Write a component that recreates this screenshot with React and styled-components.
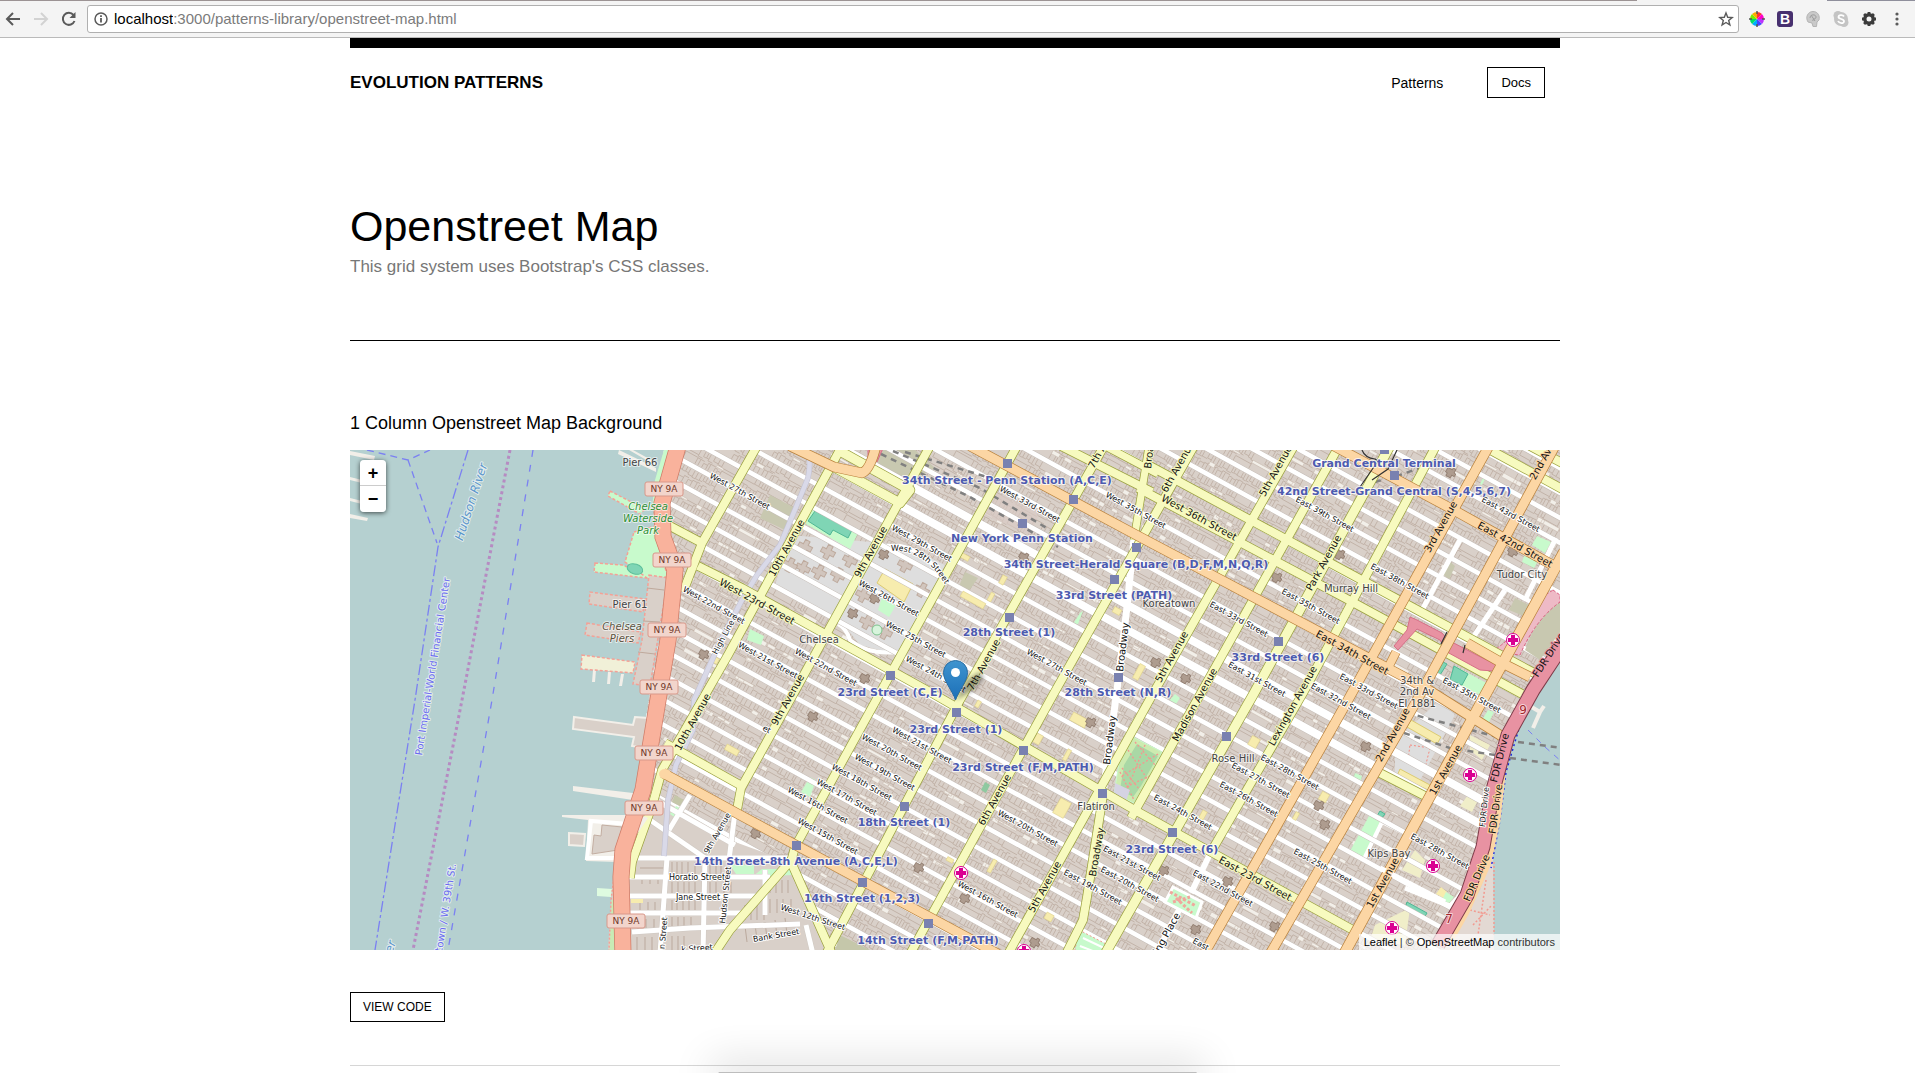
import React from "react";
import styled, { createGlobalStyle } from "styled-components";

const GlobalStyle = createGlobalStyle`
  *, *::before, *::after { box-sizing: border-box; }
  html, body { margin: 0; padding: 0; }
  body {
    background: #fff;
    color: #000;
    font-family: "Liberation Sans", Arial, sans-serif;
    overflow: hidden;
  }
`;

/* ---------- browser bar ---------- */

const BrowserBar = styled.header`
  display: flex;
  align-items: center;
  height: 38px;
  padding: 1px 8px 0 3px;
  background:
    linear-gradient(to right, #9c9394 0 85.5%, #f4f4f4 85.5% 95.4%, #8f8f9c 95.4%) top / 100% 1px no-repeat,
    #f4f4f4;
  border-bottom: 1px solid #bababa;
`;

const NavButtons = styled.nav`
  display: flex;
  gap: 8px;
  margin-right: 8px;
`;

const IconButton = styled.button`
  display: flex;
  align-items: center;
  justify-content: center;
  width: 20px;
  height: 24px;
  padding: 0;
  border: 0;
  background: none;
  color: ${(p) => p.$color || "#5a5a5a"};
`;

const AddressBar = styled.form`
  display: flex;
  flex: 1;
  align-items: center;
  height: 28px;
  padding: 0 2px 0 6px;
  background: #fff;
  border: 1px solid #b0b0b0;
  border-radius: 3px;
`;

const Host = styled.label`
  margin-left: 6px;
  font-size: 15px;
  line-height: 20px;
`;

const AddressInput = styled.input`
  flex: 1;
  min-width: 0;
  padding: 0;
  border: 0;
  outline: 0;
  color: #7b7b7b;
  font: 15px/20px "Liberation Sans", Arial, sans-serif;
`;

const Extensions = styled.div`
  display: flex;
  gap: 8px;
  margin-left: 8px;
`;

/* ---------- page ---------- */

const Viewport = styled.div`
  padding: 0 21px 0 16px;
`;

const Page = styled.div`
  max-width: 1210px;
  margin: 0 auto;
`;

const SiteHeader = styled.header`
  display: flex;
  align-items: center;
  justify-content: space-between;
  padding: 19px 15px 0 0;
  border-top: 10px solid #000;
`;

const Brand = styled.a`
  color: #000;
  font-size: 17px;
  font-weight: 700;
  text-decoration: none;
`;

const Menu = styled.nav`
  display: flex;
  align-items: center;
  gap: 44px;
`;

const MenuLink = styled.a`
  color: #000;
  font-size: 14px;
  line-height: 18px;
  text-decoration: none;
`;

const OutlineButton = styled.button`
  height: ${(p) => (p.$small ? 30 : 31)}px;
  padding: 0 ${(p) => (p.$small ? 12 : 13)}px;
  border: 1px solid #000;
  background: #fff;
  color: #000;
  font-family: inherit;
  font-size: ${(p) => (p.$small ? 12 : 13)}px;
`;

const Intro = styled.section`
  padding: 100px 0 61px;
  border-bottom: 1px solid #000;
`;

const Title = styled.h1`
  margin: 0;
  font-size: 43px;
  font-weight: 400;
  line-height: 57px;
`;

const Lead = styled.p`
  margin: 0;
  color: #777;
  font-size: 17px;
  line-height: 24px;
`;

const Pattern = styled.section`
  padding: 70px 0 43px;
  border-bottom: 1px solid #d6d6d6;
`;

const PatternTitle = styled.h2`
  margin: 0 0 15px;
  font-size: 18px;
  font-weight: 400;
  line-height: 24px;
`;

const MapFrame = styled.div`
  position: relative;
  height: 500px;
  margin-bottom: 42px;
  overflow: hidden;
  background: #b5d0d0;
`;

const MapDrawing = styled.svg`
  display: block;
  width: 100%;
  height: 100%;
`;

const ZoomControl = styled.div`
  position: absolute;
  top: 10px;
  left: 10px;
  display: flex;
  flex-direction: column;
  border-radius: 4px;
  box-shadow: 0 1px 5px rgba(0, 0, 0, 0.65);
`;

const ZoomButton = styled.button`
  display: flex;
  align-items: center;
  justify-content: center;
  width: 26px;
  height: 26px;
  padding: 0;
  border: 0;
  border-bottom: ${(p) => (p.$first ? "1px solid #ccc" : "0")};
  border-radius: ${(p) => (p.$first ? "4px 4px 0 0" : "0 0 4px 4px")};
  background: #fff;
  color: #000;
  font: 700 18px/26px "Liberation Sans", Arial, sans-serif;
`;

const Attribution = styled.div`
  position: absolute;
  right: 0;
  bottom: 0;
  padding: 0 5px;
  background: rgba(255, 255, 255, 0.7);
  color: #333;
  font-size: 11px;
  line-height: 16px;
`;

const AttributionLink = styled.a`
  color: #000;
  text-decoration: none;
`;

const DockShadow = styled.div`
  position: fixed;
  bottom: 0;
  left: 50%;
  width: 25%;
  height: 1px;
  transform: translateX(-50%);
  background: #bdbdbd;
  box-shadow: 0 0 40px 8px rgba(0, 0, 0, 0.2);
`;

/* ---------- map labels ---------- */

const StreetLabel = styled.text`
  font-family: "DejaVu Sans", sans-serif;
  font-size: ${(p) => p.$size || 8}px;
  fill: #111;
  stroke: ${(p) => p.$halo || "#fff"};
  stroke-width: 2px;
  paint-order: stroke;
  stroke-linejoin: round;
  text-anchor: ${(p) => p.$anchor || "middle"};
`;

const PlaceLabel = styled.text`
  font-family: "DejaVu Sans", sans-serif;
  font-size: ${(p) => p.$size || 10}px;
  font-style: ${(p) => (p.$italic ? "italic" : "normal")};
  fill: ${(p) => p.$color || "#444"};
  stroke: rgba(255, 255, 255, 0.6);
  stroke-width: 2px;
  paint-order: stroke;
  stroke-linejoin: round;
  text-anchor: ${(p) => p.$anchor || "middle"};
`;

const StationLabel = styled(PlaceLabel)`
  font-size: 11px;
  font-weight: 700;
  fill: #4d5bb0;
  stroke: rgba(255, 255, 255, 0.75);
`;

const ShieldLabel = styled(PlaceLabel)`
  font-size: 9px;
  fill: #70372a;
  stroke: none;
`;

/* ---------- map data ---------- */

const TILT = 28.8;
const STEP = 21.9;
const YELLOW = "#f7fabf";
const ORANGE = "#fcd6a4";
const PINK = "#e892a2";

const avenues = [
  { c: YELLOW, d: "M757 446L702 543L683 592", w: 8 },
  { c: YELLOW, d: "M842 446L728 655L662 770L653 803L632 862L630 878", w: 8 },
  { c: YELLOW, d: "M930 446L790 700L741 788L737 810", w: 8 },
  { c: YELLOW, d: "M1017 446L890 675L795 847L791 862L832 954", w: 8 },
  { c: YELLOW, d: "M793 858L730 930L714 954", w: 8 },
  { c: YELLOW, d: "M1104 446L960 700L826 954", w: 8 },
  { c: YELLOW, d: "M1194 446L1053 695L910 954", w: 8 },
  { c: YELLOW, d: "M1149 446L1134 540", w: 7 },
  { c: YELLOW, d: "M1103 795L1087 897L1083 920L1066 954", w: 8 },
  { c: YELLOW, d: "M1294 446L1150 699L1008 954", w: 8 },
  { c: YELLOW, d: "M1339 446L1201 693L1131 818", w: 8 },
  { c: YELLOW, d: "M1390 446L1253 695L1105 954", w: 9 },
  { c: YELLOW, d: "M1436 446L1303 693L1211 852", w: 8 },
  { c: YELLOW, d: "M698 566L742 588L930 692L1140 813L1353 930", w: 8 },
  { c: YELLOW, d: "M1150 466L1345 571L1536 674", w: 8 },
  { c: YELLOW, d: "M1138 488L1345 598L1522 694", w: 8 },
  { c: YELLOW, d: "M838 450L910 490L900 503L832 466", w: 9 },
  { c: YELLOW, d: "M1061 446L1152 492", w: 8 },
  { c: YELLOW, d: "M1105 446L1158 474", w: 7 },
  { c: YELLOW, d: "M665 743L740 785", w: 8 },
  { c: YELLOW, d: "M668 525L702 543", w: 8 },
  { c: YELLOW, d: "M1483 446L1564 490", w: 8 },
  { c: YELLOW, d: "M1530 446L1564 464", w: 8 },
  { c: YELLOW, d: "M1378 772L1427 797", w: 8 },
];

const tunnelApproach = "M1410 617L1417 620L1442 633L1448 640L1473 653L1498 666L1493 671L1480 670L1447 652L1440 640L1417 629L1398 650L1394 646L1407 630Z";

const arterials = [
  { c: ORANGE, d: "M1489 446L1348 700L1204 954", w: 9 },
  { c: ORANGE, d: "M1555 446L1416 702L1270 954", w: 9 },
  { c: ORANGE, d: "M1564 552L1488 690L1344 954", w: 10 },
  { c: ORANGE, d: "M1334 446L1450 508L1556 567", w: 9 },
  { c: ORANGE, d: "M970 446L1140 537L1427 689L1503 737", w: 9 },
  { c: ORANGE, d: "M663 773L740 815L998 954", w: 9 },
  { c: ORANGE, d: "M790 446L834 467L862 473Q870 470 876 446", w: 9 },
  { c: ORANGE, d: "M1467 643L1502 663L1530 677", w: 9 },
  { c: ORANGE, d: "M1396 652L1386 672", w: 8 },
];

const villageStreets = [
  "M590 858H790", "M628 877H770", "M630 896H762", "M630 913H742", "M632 932L690 928L800 924",
  "M667 858L660 954", "M705 858L703 954", "M669 830L690 795", "M735 812L729 860", "M765 870V915",
  "M806 925L813 954", "M650 820L705 858", "M650 797L735 845",
];

const streetLabels = [
  ["West 27th Street", 740, 491], ["West 22nd Street", 714, 605], ["West 29th Street", 922, 543],
  ["West 26th Street", 889, 598], ["West 25th Street", 916, 639], ["West 24th Street", 936, 674],
  ["West 21st Street", 768, 660], ["West 22nd Street", 826, 667], ["West 33rd Street", 1030, 504],
  ["West 35th Street", 1136, 510], ["West 27th Street", 1057, 667], ["West 21st Street", 922, 745],
  ["West 20th Street", 892, 752], ["West 19th Street", 885, 772], ["West 18th Street", 862, 782],
  ["West 17th Street", 847, 797], ["West 16th Street", 818, 805], ["West 15th Street", 828, 836],
  ["West 20th Street", 1028, 828], ["West 16th Street", 988, 899], ["East 21st Street", 1132, 863],
  ["East 20th Street", 1130, 884], ["East 19th Street", 1093, 887], ["East 39th Street", 1325, 514],
  ["East 38th Street", 1400, 581], ["East 43rd Street", 1511, 514], ["East 35th Street", 1311, 606],
  ["East 33rd Street", 1239, 619], ["East 31st Street", 1257, 679], ["East 33rd Street", 1369, 691],
  ["East 32nd Street", 1341, 701], ["East 35th Street", 1472, 695], ["East 28th Street", 1290, 772],
  ["East 27th Street", 1261, 780], ["East 26th Street", 1249, 799], ["East 24th Street", 1183, 812],
  ["East 25th Street", 1323, 866], ["East 22nd Street", 1223, 888], ["East 28th Street", 1440, 851],
  ["et", 767, 729], ["East", 1201, 944],
  ["West 12th Street", 813, 917, 18], ["Bank Street", 776, 935, -10], ["Horatio Street", 697, 877, 0],
  ["Jane Street", 698, 897, 0], ["k Street", 697, 948, -4], ["Hudson Street", 725, 895, -84],
  ["n Street", 663, 933, -85], ["9th Avenue", 717, 833, -60], ["High Line", 723, 637, -62],
  ["FDR Drive", 1484, 807, -84],
];

const roadLabels = [
  ["West 23rd Street", 757, 602, TILT, YELLOW], ["West 36th Street", 1199, 518, TILT, YELLOW],
  ["East 42nd Street", 1515, 545, TILT, ORANGE], ["East 34th Street", 1352, 653, TILT, ORANGE],
  ["East 23rd Street", 1255, 879, TILT, YELLOW], ["10th Avenue", 787, 548, -61, YELLOW],
  ["9th Avenue", 871, 552, -61, YELLOW], ["7th Avenue", 984, 665, -61, YELLOW],
  ["9th Avenue", 788, 700, -61, YELLOW], ["10th Avenue", 693, 722, -61, YELLOW],
  ["6th Avenue", 995, 800, -61, YELLOW], ["5th Avenue", 1045, 887, -61, YELLOW],
  ["6th Avenue", 1178, 467, -61, YELLOW], ["5th Avenue", 1276, 471, -61, YELLOW],
  ["7th Avenue", 1105, 443, -61, YELLOW], ["Park Avenue", 1324, 563, -61, YELLOW],
  ["3rd Avenue", 1441, 527, -61, ORANGE], ["2nd Avenue", 1547, 453, -61, ORANGE],
  ["5th Avenue", 1172, 657, -61, YELLOW], ["Madison Avenue", 1195, 705, -61, YELLOW],
  ["Lexington Avenue", 1293, 706, -61, YELLOW], ["2nd Avenue", 1393, 735, -61, ORANGE],
  ["1st Avenue", 1446, 770, -61, ORANGE], ["1st Avenue", 1383, 883, -61, ORANGE],
  ["Broadway", 1123, 647, -83, "#fff"], ["Broadway", 1110, 740, -83, "#fff"],
  ["Broadway", 1097, 852, -80, YELLOW], ["Broadway", 1151, 444, -83, YELLOW],
  ["Irving Place", 1164, 939, -61, "#fff"], ["FDR Drive", 1549, 655, -57, PINK],
  ["FDR Drive", 1500, 758, -76, PINK], ["FDR Drive", 1496, 809, -82, ORANGE],
  ["FDR Drive", 1477, 878, -66, ORANGE],
];

const stations = [
  [1007, 463, "34th Street - Penn Station (A,C,E)", 480], [1073, 499],
  [1022, 523, "New York Penn Station", 538],
  [1136, 547, "34th Street-Herald Square (B,D,F,M,N,Q,R)", 564],
  [1114, 579, "33rd Street (PATH)", 595], [1009, 617, "28th Street (1)", 632],
  [890, 675, "23rd Street (C,E)", 692], [1118, 677, "28th Street (N,R)", 692],
  [956, 712, "23rd Street (1)", 729], [1023, 750, "23rd Street (F,M,PATH)", 767],
  [904, 806, "18th Street (1)", 822], [796, 845, "14th Street-8th Avenue (A,C,E,L)", 861],
  [862, 882, "14th Street (1,2,3)", 898], [928, 923, "14th Street (F,M,PATH)", 940],
  [1102, 793], [1384, 449, "Grand Central Terminal", 463],
  [1394, 475, "42nd Street-Grand Central (S,4,5,6,7)", 491],
  [1278, 641, "33rd Street (6)", 657], [1226, 736], [1172, 832, "23rd Street (6)", 849],
];

const places = [
  ["Chelsea", 819, 639], ["Flatiron", 1096, 806], ["Koreatown", 1169, 603],
  ["Murray Hill", 1351, 588], ["Tudor City", 1522, 574], ["Rose Hill", 1233, 758],
  ["Kips Bay", 1389, 853], ["Pier 66", 640, 462], ["Pier 61", 630, 604],
  ["34th &", 1417, 680], ["2nd Av", 1417, 691], ["El 1881", 1417, 703],
];

const shields = [[664, 489], [672, 560], [667, 630], [659, 687], [654, 753], [644, 808], [626, 921]];
const hospitals = [[961, 873], [1024, 951], [1513, 640], [1470, 775], [1433, 866], [1392, 928]];

const churches = [
  [883, 554], [874, 598], [852, 613], [864, 678], [812, 716], [755, 833], [918, 867], [964, 898],
  [1090, 722], [1023, 557], [1450, 472], [1339, 554], [1276, 577],
  [1512, 551], [1155, 662], [1185, 678], [1365, 746], [1318, 805], [1324, 824], [1163, 870],
  [1227, 881], [1274, 926], [1195, 929], [703, 654], [1034, 942],
];

const schools = [
  [965, 557, 9, 5], [1003, 580, 5, 9], [991, 597, 4, 9], [973, 600, 26, 6], [1079, 720, 17, 9],
  [1038, 739, 7, 10], [1062, 808, 12, 17], [992, 866, 4, 14], [1049, 917, 8, 7], [1139, 672, 6, 16],
  [978, 704, 4, 7], [1254, 742, 9, 10], [1324, 797, 8, 9], [1296, 816, 4, 8], [732, 750, 14, 6],
  [715, 660, 7, 6], [1117, 611, 8, 6], [950, 860, 7, 4], [1067, 755, 4, 12], [1203, 815, 5, 9],
];

function seeded(seed) {
  let s = seed;
  return () => {
    s = (s * 16807) % 2147483647;
    return s / 2147483647;
  };
}

function onMap(u, v) {
  const a = (TILT * Math.PI) / 180;
  const x = 1140 + u * Math.cos(a) - v * Math.sin(a);
  const y = 537 + u * Math.sin(a) + v * Math.cos(a);
  return x > 640 && x < 1565 && y > 440 && y < 960;
}

/* Lot lines and rear courtyards of every block, in the street grid's own axes. */
function buildLots() {
  const rnd = seeded(4711);
  let lots = "";
  let yards = "";
  for (let k = -24; k < 26; k += 1) {
    const top = k * STEP + 3;
    const bottom = (k + 1) * STEP - 3;
    for (const side of [0, 1]) {
      let u = -780;
      while (u < 780) {
        const big = rnd() > 0.88;
        const w = big ? 9 + rnd() * 12 : 2.4 + rnd() * 3.2;
        const depth = 4.5 + rnd() * 3;
        if (onMap(u, top)) {
          const from = side ? bottom : top;
          const dir = side ? -1 : 1;
          lots += `M${u.toFixed(1)} ${from.toFixed(1)}v${(dir * depth).toFixed(1)}h${w.toFixed(1)}`;
          if (rnd() > 0.93) {
            const y = (top + bottom) / 2 - 1.5;
            yards += `M${u.toFixed(1)} ${y.toFixed(1)}h${(w + 3).toFixed(1)}v${(1.5 + rnd() * 3).toFixed(1)}h-${(w + 3).toFixed(1)}z`;
          }
        }
        u += w;
      }
    }
  }
  return { lots, yards };
}

const { lots, yards } = buildLots();

function streetPath(wide) {
  let d = "";
  for (let k = -24; k < 26; k += 1) {
    if ((k === 3 || k === 4) === wide) d += `M-800 ${(k * STEP).toFixed(1)}H800`;
  }
  return d;
}

const narrowStreets = streetPath(false);
const wideStreets = streetPath(true);
const grid = `translate(1140 537) rotate(${TILT})`;

const place = (x, y, a) => `translate(${x} ${y}) rotate(${a})`;

function Roads({ items }) {
  return (
    <g fill="none" strokeLinejoin="round">
      {items.map((a) => (
        <path key={a.d} d={a.d} stroke={a.c === YELLOW ? "#9aa03c" : "#b9803a"} strokeWidth={a.w + 1.4} />
      ))}
      {items.map((a) => (
        <path key={a.d} d={a.d} stroke={a.c} strokeWidth={a.w} />
      ))}
    </g>
  );
}

function Landmarks() {
  return (
    <g>
      <path d="M872 450H915L935 468L905 484L880 466Z" fill="#c8c8b0" />
      <path d="M770 495L795 508L785 530L760 518Z M965 572L978 578L968 592L959 586Z" fill="#c8c8b0" />
      <path d="M790 535L905 545L945 565L912 640L900 655L860 645L840 620L775 585Z" fill="#dedede" />
      <g fill="#d1c5bd" stroke="#bda99c" strokeWidth="1">
        {[[805, 547], [828, 552], [803, 568], [819, 572], [850, 560], [905, 565], [922, 590], [863, 595], [867, 622], [885, 632], [790, 565], [838, 575]].map(([x, y]) => (
          <path key={`${x}-${y}`} transform={place(x, y, TILT)} d="M-7 -2h4v-5h5v4h5v5h-4v5h-5v-4h-5z" />
        ))}
      </g>
      <path d="M808 507L858 533L850 549L806 524Z M882 597L896 605L889 617L878 610Z M750 629L764 636L761 645L747 640Z" fill="#c8facc" />
      <path d="M815 511L852 530L848 538L833 530L830 535L808 521Z" fill="#7fd5b5" stroke="#4fb795" />
      <path d="M885 569L913 584L904 602L877 583Z" fill="#f7ecae" stroke="#dccb72" />
      <circle cx="877" cy="630" r="5" fill="#d7f4dc" stroke="#7cc38c" />
      <path d="M838 624Q846 628 850 640Q868 655 898 652" fill="none" stroke="#fff" strokeWidth="4" />
      <path d="M882 546L900 546Q930 552 944 583" fill="none" stroke="#fff" strokeWidth="4" />
      <path d="M810 777L816 780L810 797L801 792Z M1080 613L1083 611L1078 624L1073 624Z M1175 694L1180 698L1176 704L1169 701Z" fill="#c8facc" />
      <path d="M985 782L990 785L986 793L981 790Z" fill="#8fc9a0" />
      <path d="M990 490L1040 512L1030 535L985 515Z" fill="#d8cbc4" opacity="0.7" />
      <path d="M1395 740L1440 700L1455 715L1415 790L1395 780Z" fill="#dedede" />
      <path d="M1411 720L1441 737L1437 744L1407 727Z M1400 769L1430 785L1428 790L1397 776Z" fill="#f7ecae" stroke="#dccb72" />
      <path d="M1410 745L1430 748L1425 768L1408 760Z" fill="none" stroke="#f48a80" strokeDasharray="2 2" />
      <g fill="#f0eec9">
        <path d="M1470 735L1490 745L1482 760L1470 750Z M1468 795L1478 800L1472 812L1460 806Z M1415 850L1425 860L1420 878L1402 870Z M1375 925L1410 908L1405 945L1370 940Z" />
      </g>
      <path d="M1369 816L1380 822L1363 858L1350 851Z" fill="#c8facc" />
      <path d="M1380 811L1385 814L1381 819L1377 816Z" fill="#7fd5b5" stroke="#4fb795" />
      <path d="M1382 822L1363 861M1382 822L1402 832" stroke="#fff" strokeWidth="4" fill="none" />
      <path d="M1441 887L1447 892L1444 898L1436 894Z" fill="#f7ecae" />
      <path d="M1446 892L1454 897L1449 903L1442 900Z" fill="#c8facc" />
      <path d="M1407 902L1427 913L1424 918L1405 908Z" fill="#7fd5b5" stroke="#4fb795" />
      <path d="M1537 536L1551 542L1545 553L1532 545Z M1524 556L1538 561L1534 568L1522 562Z M1484 476L1486 477L1482 485L1480 484Z" fill="#c8facc" />
      <path d="M1448 560L1455 566L1449 580L1443 574Z M1515 598L1531 606L1526 617L1509 610Z" fill="#c8c8b0" />
      <path d="M1455 666L1492 686L1486 698L1450 680Z" fill="#c8facc" />
      <path d="M1435 658L1447 664L1440 675L1432 672Z M1454 666L1468 674L1462 685L1450 680Z" fill="#7fd5b5" stroke="#4fb795" />
      <path d="M1488 710L1494 712L1488 724L1482 720Z M1355 773L1362 776L1360 784L1353 780Z" fill="#c8facc" />
      <path d="M868 446L884 446L877 462L868 458Z" fill={PINK} stroke="#d66f87" />
    </g>
  );
}

function RailTracks() {
  return (
    <g fill="none" stroke="#808080" strokeWidth="2.5" strokeDasharray="6 5">
      <path d="M881 454L970 497L1058 547" />
      <path d="M893 451L980 488L1050 530" />
      <path d="M905 452L990 478" />
      <path d="M1375 482L1400 475L1420 468" />
      <path d="M1407 713L1501 738" />
      <path d="M1404 733L1450 748L1501 756" />
    </g>
  );
}

function Squares() {
  return (
    <g>
      <path d="M1133 737L1162 752L1143 790L1134 803L1114 794L1119 763Z" fill="#cdebb0" stroke="#c8facc" />
      <path d="M1137 744L1158 756L1141 786L1133 797L1120 790L1124 765Z" fill="#a9d8a5" />
      <path d="M1122 768L1140 790M1128 750L1148 780M1135 742L1155 765M1158 754L1122 776M1150 776L1121 789M1145 745L1125 795M1120 772L1134 800" fill="none" stroke="#f29a90" strokeWidth="1.4" strokeDasharray="2 2" />
      <path d="M1115 783L1130 790L1126 801L1114 794Z" fill="#d5d3e3" />
      <path d="M1079 930L1108 945L1112 954H1074Z" fill="#c8facc" stroke="#f29a90" strokeDasharray="2 2" />
      <path d="M1083 938L1104 948M1080 946L1098 953" stroke="#fff" strokeWidth="2" />
      <path d="M1173 887L1202 902L1196 918L1165 902Z" fill="#c8facc" stroke="#fff" strokeWidth="3" />
      <path d="M1170 892L1196 906M1176 898L1192 913M1173 902L1190 897" stroke="#f0a79c" strokeWidth="3" strokeDasharray="3 2" />
      <path d="M1560 598L1540 615L1525 650L1540 660L1560 632Z" fill="#c8c8b0" />
      <path d="M1553 590L1560 595L1560 602Q1535 620 1520 655L1490 652Q1515 640 1530 605Z" fill="#eebac6" stroke="#da5f80" strokeDasharray="3 2" />
    </g>
  );
}

function Village() {
  return (
    <g>
      <path d="M655 795L735 842L790 862L832 954H615L618 880L636 830Z" fill="#d9d0c9" />
      <path d="M640 868h24m-22 6v10m8-10v10m8-10v10M672 862v12m5-12v12m5-12v12m6-12v12m7-12v12M672 882v12m6-12v12m6-12v12m5-12v12m6-12v12M672 900v11m5-11v11m6-11v11m6-11v11m6-11v11M640 902v10m8-10v10m7-10v10M710 864v10m6-10v10m5-10v10m6-10v10M710 882v12m6-12v12m8-12v12m7-12v12M672 917v9m6-9v9m6-9v9m7-9v9M638 919v10m8-10v10m8-10v10M672 936v14m6-14v14m6-14v14M637 937v13m8-13v13m7-13v13M745 905v15m6-15v15m6-15v15m7-15v15M770 880v13m6-13v13m6-13v13m6-13v13M770 899v14m7-14v14m6-14v14m8-14v14M745 926l2 16m8-18l2 16m8-18l2 16m8-18l2 16m8-18l2 16" fill="none" stroke="#bba99d" strokeWidth="1" />
      <path d="M676 806L684 810L678 820L670 814Z M730 865H754V874H736Z M752 877l10-8l30 0v6z" fill="#c8facc" />
      <path d="M631 898H643V903H631Z" fill="#f7ecae" />
      <path d="M675 795L684 800L680 806L672 802Z M840 935L870 950H835Z" fill="#c5c7aa" />
      <g fill="none" stroke="#cfc8c2" strokeWidth="6">{villageStreets.map((d) => <path key={d} d={d} />)}</g>
      <g fill="none" stroke="#fff" strokeWidth="5">{villageStreets.map((d) => <path key={d} d={d} />)}</g>
    </g>
  );
}

function Waterfront() {
  return (
    <g>
      <path d="M350 450H664L655 485L653 515L656 535L664 560L665 600L659 640L650 690L638 772L632 805L618 850L612 885L608 950H350Z" fill="#b5d0d0" />
      <g fill="#f2efe9">
        <path d="M350 451L375 456L374 460L350 455Z M350 477L362 480V483L350 480Z M350 498L362 501V504L350 501Z M350 514L368 518L367 521L350 518Z" />
        <path d="M619 450L656 468V472L618 454Z M633 450L655 462V465L629 450Z" />
        <path d="M573 786L633 793V800L573 791Z M562 815H640L648 818L618 862L586 861L588 820L562 817Z" />
        <path d="M593 670L596 670L595 682H592Z M608 672L611 672L610 684H607Z M621 674L624 674L622 686H619Z" />
      </g>
      <g fill="#c8facc" stroke="#f4a196" strokeWidth="1.5" strokeDasharray="3 2">
        <path d="M610 491L645 509L640 514L608 496Z" />
        <path d="M595 563L622 565L645 573L646 578L594 572Z" />
        <path d="M634 532L655 526L658 545L668 577L647 578L625 562Z" />
      </g>
      <path d="M664 450H675L656 505L652 508L655 480Z" fill="#c8facc" />
      <ellipse cx="635" cy="569" rx="8" ry="5" transform="rotate(18 635 569)" fill="#7fd5b5" stroke="#5cbf9b" />
      <g fill="#d9d0c9" stroke="#f4a196" strokeWidth="1.5" strokeDasharray="3 2">
        <path d="M590 592L645 599L643 612L589 604Z" />
        <path d="M587 623L641 632L638 643L585 635Z" />
        <path d="M582 655L635 662L633 673L581 669Z" fill="#f1f0d8" />
        <path d="M649 575L668 578L650 686L633 684L642 640Z" />
      </g>
      <path d="M647 588L664 590M643 621L660 622M638 652L655 654" stroke="#bfa99c" />
      <g fill="#d9d0c9" stroke="#f2efe9" strokeWidth="2">
        <path d="M574 717L633 725L635 717L648 718L645 748L632 746L634 737L573 729Z" />
        <path d="M569 833L585 834L584 846L569 845Z" />
        <path d="M602 825L622 827L618 850L592 854L594 835L601 836Z" stroke="#c3aea2" strokeWidth="1" />
      </g>
      <path d="M629 824L591 821L587 858H630" fill="none" stroke="#fff" strokeWidth="4" />
      <path d="M597 888L612 889L611 897L597 896Z" fill="#defbe0" />
      <path d="M614 900L612 950" stroke="#c8ebb5" strokeWidth="5" />
      <path d="M639 770L634 805L625 835" fill="none" stroke="#1a28e0" strokeWidth="1.5" strokeDasharray="2 2" />
      <path d="M616 862L611 900L609 950" fill="none" stroke="#f4a196" strokeWidth="1.5" strokeDasharray="2 2" />
      <g fill="none" stroke="#7b80f2" strokeWidth="1.3">
        <path d="M468 450L438 547L415 700L375 950" strokeDasharray="11 3 3 3" />
        <path d="M367 450L408 460L430 450M408 460L437 543" strokeDasharray="7 5" />
        <path d="M533 450L492 700L448 950" strokeDasharray="7 8" />
      </g>
      <path d="M510 450L462 700L413 950" fill="none" stroke="#b68bc2" strokeWidth="3" strokeDasharray="3 3" />
    </g>
  );
}

function EastRiver() {
  return (
    <g fill="none">
      <path d="M1508 735L1540 690L1560 656V950H1455L1480 890L1495 850L1500 800Z" fill="#b5d0d0" />
      <path d="M1493 850L1494 950H1440L1480 890Z" fill="#e3d9d3" />
      <path d="M1494 862V935M1486 880L1478 935M1470 910L1490 915M1473 925L1492 905" stroke="#f29a90" strokeWidth="1.5" strokeDasharray="2 2" />
      <path d="M1530 706L1540 712L1533 728M1540 712L1544 706" stroke="#f2efe9" strokeWidth="4" />
      <path d="M1528 730L1545 747L1562 762" stroke="#7b80f2" strokeDasharray="6 6" />
      <path d="M1520 725L1506 772L1500 820L1491 868" stroke="#1a28e0" strokeWidth="1.5" strokeDasharray="2 3" />
      <path d="M1502 775L1497 820L1487 865L1466 912L1450 940" stroke={ORANGE} strokeWidth="7" />
      <path d="M1474 862Q1468 890 1450 906L1405 888M1380 868L1445 902M1482 830L1474 862" stroke="#fff" strokeWidth="5" />
      <path d="M1566 640L1533 690L1508 735L1493 790L1483 847L1467 895L1438 945" stroke="#7c3b48" strokeWidth="15" />
      <path d="M1566 640L1533 690L1508 735L1493 790L1483 847L1467 895L1438 945" stroke={PINK} strokeWidth="13" />
      <g stroke="#808080" strokeWidth="2.5" strokeDasharray="6 5">
        <path d="M1518 742L1562 748M1510 758L1562 765" />
      </g>
    </g>
  );
}

const highLine = "M806 446Q812 460 808 478Q795 510 780 545L757 575L742 600L722 638L694 700L693 730L676 765L668 800L664 856";
const westSideHighway = "M678 446L662 503L663 537L675 570L668 640L658 700L643 790L623 850L621 877L623 954";

function CityMap() {
  return (
    <MapDrawing viewBox="350 450 1210 500" preserveAspectRatio="xMidYMid slice" role="img" aria-label="Map of Chelsea and Midtown Manhattan">
      <rect x="350" y="450" width="1210" height="500" fill="#d9d0c9" />
      <g transform={grid}>
        <path d={lots} fill="none" stroke="#bfafa4" strokeWidth="0.8" />
        <path d={yards} fill="#f2efe9" stroke="#c9bbb0" strokeWidth="0.5" />
      </g>
      <Landmarks />
      <g transform={grid} fill="none">
        <path d={narrowStreets} stroke="#c4bcb6" strokeWidth="5.6" />
        <path d={wideStreets} stroke="#c4bcb6" strokeWidth="9" />
        <path d={narrowStreets} stroke="#fff" strokeWidth="4.6" />
        <path d={wideStreets} stroke="#fff" strokeWidth="8" />
      </g>
      <RailTracks />
      {schools.map(([x, y, w, h]) => (
        <rect key={`${x}-${y}`} transform={place(x, y, TILT)} x={-w / 2} y={-h / 2} width={w} height={h} fill="#f7ecae" stroke="#e0d28d" strokeWidth="0.6" />
      ))}
      {churches.map(([x, y]) => (
        <path key={`${x}-${y}`} transform={place(x, y, TILT)} d="M-4 -3h5v-2h3v4h2v3h-3v3h-5v-3h-2z" fill="#ae9c8f" stroke="#8c786b" strokeWidth="0.8" />
      ))}
      <Village />
      <g fill="none" stroke="#fff" strokeWidth="7">
        <path d="M1134 538L1127 607L1117 690L1103 793" />
        <path d="M1211 852L1191 893M1180 908L1156 954" strokeWidth="6" />
        <path d="M1461 538L1421 612M1505 590L1470 642M1556 538L1526 598" strokeWidth="5" />
      </g>
      <path d={highLine} fill="none" stroke="#c3c2d2" strokeWidth="5.6" />
      <path d={highLine} fill="none" stroke="#d9d9e8" strokeWidth="4.4" />
      <Squares />
      <Roads items={avenues} />
      <path d={tunnelApproach} fill={PINK} stroke="#d66f87" />
      <Roads items={arterials} />
      <ellipse cx="665" cy="774" rx="6" ry="5" fill={ORANGE} />
      <g fill="none" stroke="#333" strokeWidth="1.2">
        <path d="M1362 450Q1365 458 1375 459L1378 461L1360 487M1397 450L1388 469L1372 480M1447 632L1441 644M1465 645L1463 653" />
      </g>
      <Waterfront />
      <path d={westSideHighway} fill="none" stroke="#cf7c68" strokeWidth="17" />
      <path d={westSideHighway} fill="none" stroke="#f9b29c" strokeWidth="15.5" />
      <EastRiver />

      {streetLabels.map(([t, x, y, a = TILT]) => (
        <StreetLabel key={`${t}${x}`} transform={place(x, y, a)} dy="3">{t}</StreetLabel>
      ))}
      <path id="west28" d="M891 551Q925 548 947 588" fill="none" />
      <StreetLabel $anchor="start"><textPath href="#west28">West 28th Street</textPath></StreetLabel>
      {roadLabels.map(([t, x, y, a, halo]) => (
        <StreetLabel key={`${t}${x}`} $size={10} $halo={halo} transform={place(x, y, a)} dy="3">{t}</StreetLabel>
      ))}

      {places.map(([t, x, y]) => (
        <PlaceLabel key={t} x={x} y={y + 4}>{t}</PlaceLabel>
      ))}
      {["Chelsea", "Waterside", "Park"].map((t, i) => (
        <PlaceLabel key={t} $italic $color="#2f9136" x="648" y={510 + i * 12}>{t}</PlaceLabel>
      ))}
      {["Chelsea", "Piers"].map((t, i) => (
        <PlaceLabel key={t} $italic $color="#5c5340" x="622" y={630 + i * 12}>{t}</PlaceLabel>
      ))}
      <PlaceLabel $italic $size={12} $color="#5b96cc" transform={place(475, 503, -72)}>Hudson River</PlaceLabel>
      <PlaceLabel $italic $size={12} $color="#5b96cc" $anchor="end" transform={place(396, 942, -72)}>Hudson River</PlaceLabel>
      <PlaceLabel $color="#6a6af0" transform={place(436, 667, -81)}>Port Imperial-World Financial Center</PlaceLabel>
      <PlaceLabel $color="#6a6af0" $anchor="end" transform={place(456, 864, -81)}>Midtown / W. 39th St.</PlaceLabel>

      {shields.map(([x, y]) => (
        <g key={y}>
          <rect x={x - 19} y={y - 7} width="38" height="14" rx="2" fill="#f2d5cc" stroke="#d9988a" />
          <ShieldLabel x={x} y={y + 3}>NY 9A</ShieldLabel>
        </g>
      ))}
      <PlaceLabel $size={12} $color="#a3272c" x="1523" y="714">9</PlaceLabel>
      <PlaceLabel $size={12} $color="#a3272c" x="1449" y="923">7</PlaceLabel>

      {stations.map(([x, y, t, ty]) => (
        <g key={`${x}-${y}`}>
          <rect x={x - 4} y={y - 4} width="9" height="9" fill="#7981b0" />
          {t && <StationLabel x={x} y={ty + 4}>{t}</StationLabel>}
        </g>
      ))}
      {hospitals.map(([x, y]) => (
        <g key={x} transform={place(x, y, 0)}>
          <circle r="6.5" fill="#fff" stroke="#da0092" strokeWidth="1" />
          <path d="M-2 -5H2V-2H5V2H2V5H-2V2H-5V-2H-2Z" fill="#da0092" />
        </g>
      ))}

      <g>
        <defs>
          <linearGradient id="pin" x1="0" y1="0" x2="0" y2="1">
            <stop offset="0" stopColor="#3f94cf" />
            <stop offset="1" stopColor="#1b6fb8" />
          </linearGradient>
          <filter id="soft" x="-30%" y="-30%" width="160%" height="160%"><feGaussianBlur stdDeviation="2" /></filter>
        </defs>
        <path d="M956 700L966 680L980 672L984 678L974 690Z" fill="#000" opacity="0.35" filter="url(#soft)" />
        <path d="M955.500 700C952 690 943.500 681 943.500 672.500A12 12 0 0 1 967.500 672.500C967.500 681 959 690 955.500 700Z" fill="url(#pin)" stroke="#2a6ea3" />
        <circle cx="955.500" cy="672.500" r="4.500" fill="#fff" />
      </g>
    </MapDrawing>
  );
}

/* ---------- toolbar icons ---------- */

const Svg = ({ children, size = 18 }) => (
  <svg width={size} height={size} viewBox="0 0 18 18" fill="none" stroke="currentColor" strokeWidth="2" aria-hidden="true">{children}</svg>
);

const BackIcon = () => <Svg><path d="M16 9H3M9 3L3 9l6 6" /></Svg>;
const ForwardIcon = () => <Svg><path d="M2 9H15M9 3l6 6-6 6" /></Svg>;
const ReloadIcon = () => (
  <Svg><path d="M14.500 11A6 6 0 1 1 13.500 5" /><path d="M15.500 2V8H9.500Z" fill="currentColor" stroke="none" /></Svg>
);
const InfoIcon = () => (
  <svg width="14" height="14" viewBox="0 0 14 14" fill="none" stroke="#5a5a5a" strokeWidth="1.500" aria-hidden="true">
    <circle cx="7" cy="7" r="6" /><path d="M7 6V10.500M7 3.300V5" strokeWidth="1.800" />
  </svg>
);
const StarIcon = () => (
  <Svg><path strokeWidth="1.400" d="M9 3L10.700 7.300L15.200 7.600L11.700 10.500L12.900 15L9 12.500L5.100 15L6.300 10.500L2.800 7.600L7.300 7.300Z" /></Svg>
);

const wheel = ["#f33", "#f0c", "#b3f", "#44f", "#0af", "#0d6", "#7e0", "#fa0"];
const WheelIcon = () => (
  <Svg>
    <g stroke="none">
      {wheel.map((c, i) => (
        <path key={c} fill={c} transform={`rotate(${i * 45} 9 9)`} d="M9 9V2A7 7 0 0 1 14 4Z" />
      ))}
    </g>
    <path stroke="#555" strokeWidth="1.500" d="M9 1v3M9 14v3M1 9h3M14 9h3" />
  </Svg>
);
const BadgeB = styled.span`
  display: flex;
  align-items: center;
  justify-content: center;
  width: 16px;
  height: 16px;
  border-radius: 3px;
  background: #47306f;
  color: #fff;
  font-size: 14px;
  font-weight: 700;
  line-height: 16px;
`;
const HeadIcon = () => (
  <Svg>
    <path fill="#c9c9c9" stroke="#b4b4b4" strokeWidth="1" d="M4 12C1 7 4 1.500 9 1.500S16 6 15 10L13 12L12.500 16.500H9L8 13Z" />
    <path stroke="#9c9c9c" strokeWidth="1" d="M6 8C6 4 12 4 12 7S8 8 9 11M7 5l4 6" />
  </Svg>
);
const SkypeIcon = () => (
  <Svg>
    <g fill="#c4c4c4" stroke="none"><circle cx="9" cy="9" r="7" /><circle cx="6" cy="5.500" r="4.500" /><circle cx="12" cy="12.500" r="4.500" /></g>
    <path stroke="#fff" strokeWidth="1.800" d="M12 6.500C11 4.500 6.500 4.500 6.500 7S12 8.500 12 11.200S7 13.500 6 11" />
  </Svg>
);
const GearIcon = () => (
  <Svg>
    <circle cx="9" cy="9" r="4.200" stroke="#3c3c3c" strokeWidth="3.400" />
    <g stroke="#3c3c3c" strokeWidth="2.800">
      {[0, 45, 90, 135].map((a) => <path key={a} transform={`rotate(${a} 9 9)`} d="M9 2V4.500M9 13.500V16" />)}
    </g>
  </Svg>
);
const DotsIcon = () => (
  <Svg><g fill="currentColor" stroke="none"><circle cx="9" cy="4" r="1.600" /><circle cx="9" cy="9" r="1.600" /><circle cx="9" cy="14" r="1.600" /></g></Svg>
);

export default function App() {
  return (
    <>
      <GlobalStyle />
      <BrowserBar>
        <NavButtons aria-label="History">
          <IconButton aria-label="Back"><BackIcon /></IconButton>
          <IconButton aria-label="Forward" $color="#d2d2d2"><ForwardIcon /></IconButton>
          <IconButton aria-label="Reload"><ReloadIcon /></IconButton>
        </NavButtons>
        <AddressBar onSubmit={(e) => e.preventDefault()}>
          <InfoIcon />
          <Host htmlFor="address">localhost</Host>
          <AddressInput id="address" defaultValue=":3000/patterns-library/openstreet-map.html" />
          <IconButton type="button" aria-label="Bookmark"><StarIcon /></IconButton>
        </AddressBar>
        <Extensions>
          <IconButton aria-label="Color picker"><WheelIcon /></IconButton>
          <IconButton aria-label="Bootstrap"><BadgeB>B</BadgeB></IconButton>
          <IconButton aria-label="Profile"><HeadIcon /></IconButton>
          <IconButton aria-label="Skype"><SkypeIcon /></IconButton>
          <IconButton aria-label="Settings"><GearIcon /></IconButton>
          <IconButton aria-label="Menu"><DotsIcon /></IconButton>
        </Extensions>
      </BrowserBar>

      <Viewport>
        <Page>
          <SiteHeader>
            <Brand href="#">EVOLUTION PATTERNS</Brand>
            <Menu>
              <MenuLink href="#patterns">Patterns</MenuLink>
              <OutlineButton>Docs</OutlineButton>
            </Menu>
          </SiteHeader>

          <main>
            <Intro>
              <Title>Openstreet Map</Title>
              <Lead>This grid system uses Bootstrap's CSS classes.</Lead>
            </Intro>

            <Pattern id="patterns">
              <PatternTitle>1 Column Openstreet Map Background</PatternTitle>
              <MapFrame>
                <CityMap />
                <ZoomControl>
                  <ZoomButton $first aria-label="Zoom in">+</ZoomButton>
                  <ZoomButton aria-label="Zoom out">−</ZoomButton>
                </ZoomControl>
                <Attribution>
                  <AttributionLink href="#leaflet">Leaflet</AttributionLink> | ©{" "}
                  <AttributionLink href="#osm">OpenStreetMap</AttributionLink> contributors
                </Attribution>
              </MapFrame>
              <OutlineButton $small>VIEW CODE</OutlineButton>
            </Pattern>
          </main>
        </Page>
      </Viewport>
      <DockShadow />
    </>
  );
}
